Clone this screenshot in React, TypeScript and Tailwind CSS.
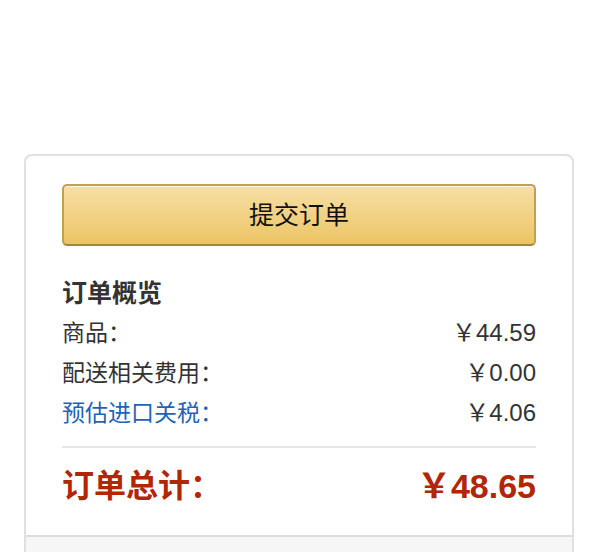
import React from 'react';

const font = { fontFamily: '"Liberation Sans", "Noto Sans CJK SC", sans-serif' };

const rows = [
  { label: '商品：', value: '￥44.59', link: false },
  { label: '配送相关费用：', value: '￥0.00', link: false },
  { label: '预估进口关税：', value: '￥4.06', link: true },
];

export default function App() {
  return (
    <div className="min-h-[552px] bg-white pt-[154px] pl-[24px] pr-[26px]" style={font}>
      <div className="border-2 border-[#e0e0e0] rounded-[8px] overflow-hidden">
        <div className="px-[36px] pt-[28px] pb-[29px]">
          {/* Place order */}
          <button className="w-full h-[62px] rounded-[5px] border-2 border-[#c2a04d] border-b-[#a88734] bg-gradient-to-b from-[#f7dfa5] to-[#ecc462] shadow-[inset_0_1px_0_rgba(255,255,255,0.7)] text-[25px] text-[#111] leading-none">
            提交订单
          </button>

          {/* Summary */}
          <h3 className="mt-[27px] h-[40px] leading-[40px] text-[25px] font-bold text-[#333]">订单概览</h3>
          {rows.map((r) => (
            <div key={r.label} className="flex items-center justify-between h-[40px] text-[23px] text-[#333]">
              <span className={r.link ? 'text-[#1f63b8]' : ''}>{r.label}</span>
              <span className="text-[24px]">{r.value}</span>
            </div>
          ))}

          <div className="mt-[13px] border-t-2 border-[#e7e7e7]" />

          <div className="mt-[18px] flex items-center justify-between h-[40px] font-bold text-[#b12704]">
            <span className="text-[32px]">订单总计：</span>
            <span className="text-[34px]">￥48.65</span>
          </div>
        </div>
        <div className="h-[40px] border-t-2 border-[#dddddd] bg-[#f6f6f6]" />
      </div>
    </div>
  );
}
